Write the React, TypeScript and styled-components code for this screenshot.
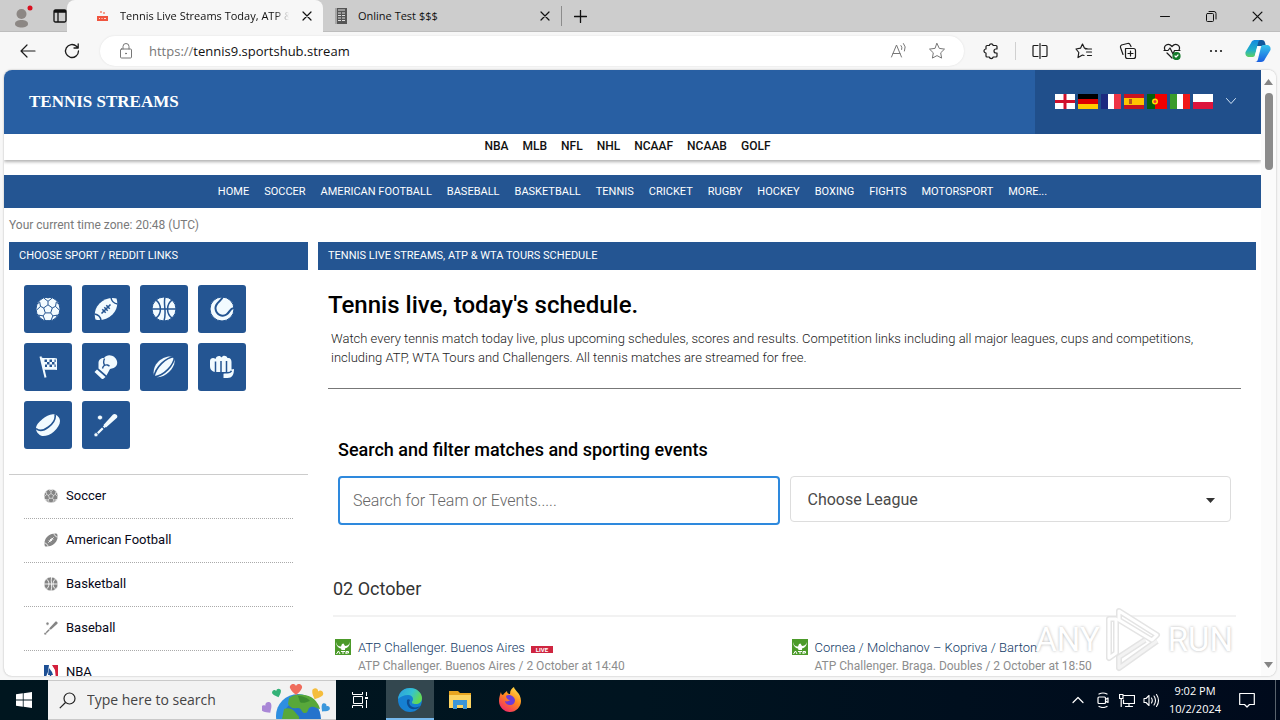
import React from "react";
import styled, { createGlobalStyle } from "styled-components";

const ui = `"Open Sans", "Noto Sans", sans-serif`;
const site = `Roboto, "Liberation Sans", sans-serif`;
const navy = "#245592";

const GlobalStyle = createGlobalStyle`
  *, *::before, *::after { box-sizing: border-box; }
  body { margin: 0; background: #f7f7f7; font-family: ${site}; }
  button { font: inherit; color: inherit; border: 0; padding: 0; background: none; }
  a { color: inherit; text-decoration: none; }
  h1, h2, h3, p, ul { margin: 0; padding: 0; }
  ul { list-style: none; }
  svg { display: block; flex: none; }
`;

const Desktop = styled.div`
  display: flex;
  flex-direction: column;
  height: 100vh;
  overflow: hidden;
`;

/* ---------- browser chrome ---------- */

const TabStrip = styled.header`
  display: flex;
  height: 32px;
  flex: none;
  background: #cdcdcd;
  border-bottom: 1px solid #bdbdbd;
  font: 11px/16px ${ui};
  color: #111;
`;

const StripTools = styled.div`
  display: flex;
  align-items: center;
  gap: 20px;
  width: 67px;
  padding-left: 11px;
`;

const Tab = styled.div<{ $active?: boolean; $width: number }>`
  display: flex;
  align-items: center;
  width: ${(p) => p.$width}px;
  height: 32px;
  padding: 0 9px 0 ${(p) => (p.$active ? 29 : 11)}px;
  gap: ${(p) => (p.$active ? 11 : 10)}px;
  border-radius: 8px 8px 0 0;
  background: ${(p) => (p.$active ? "#f7f7f7" : "transparent")};
`;

const TabTitle = styled.span<{ $fade?: boolean }>`
  flex: 1;
  min-width: 0;
  overflow: hidden;
  white-space: nowrap;
  ${(p) =>
    p.$fade &&
    "mask-image: linear-gradient(to right, #000 calc(100% - 14px), transparent);"}
`;

const IconButton = styled.button<{ $w?: number; $h?: number }>`
  display: flex;
  align-items: center;
  justify-content: center;
  flex: none;
  width: ${(p) => p.$w ?? 44}px;
  height: ${(p) => p.$h ?? 30}px;
`;

const StripDivider = styled.span`
  width: 1px;
  height: 20px;
  margin: 6px 0 0;
  background: #8c8c8c;
`;

const WindowControls = styled.div`
  display: flex;
  margin-left: auto;
`;

const Toolbar = styled.div`
  display: flex;
  align-items: center;
  flex: none;
  height: 38px;
  padding: 0 2px 0 6px;
  background: #f7f7f7;
  color: #1b1b1b;
`;

const AddressBar = styled.div`
  display: flex;
  align-items: center;
  flex: 1;
  height: 30px;
  margin: 0 5px 0 6px;
  padding: 0 8px 0 17px;
  border-radius: 15px;
  background: #fff;
  box-shadow: 0 0 2px #ddd;
  font: 13px/18px ${ui};
  color: #777;
`;

const Scheme = styled.label`
  margin-left: 14px;
`;

const AddressInput = styled.input`
  flex: 1;
  min-width: 0;
  padding: 0;
  border: 0;
  outline: 0;
  background: none;
  color: #111;
  font: inherit;
`;

const ToolDivider = styled.span`
  width: 1px;
  height: 18px;
  margin: 0 2px;
  background: #d0d0d0;
`;

/* ---------- page frame ---------- */

const Frame = styled.div`
  display: flex;
  flex: 1;
  min-height: 0;
  margin: 0 4px 4px;
  overflow: hidden;
  border-radius: 8px;
  background: #fff;
  box-shadow: 0 0 2px #aaa;
  position: relative;
`;

const Page = styled.div`
  flex: 1;
  min-width: 0;
  overflow: hidden;
`;

const ScrollTrack = styled.div`
  display: flex;
  flex-direction: column;
  align-items: center;
  width: 15px;
  padding: 9px 0 8px;
  background: #fbfbfb;
`;

const ScrollThumb = styled.div`
  width: 8px;
  height: 77px;
  margin: 8px 0 auto;
  border-radius: 4px;
  background: #8b8b8b;
`;

/* ---------- site ---------- */

const SiteHeader = styled.div`
  display: flex;
  justify-content: space-between;
  align-items: stretch;
  height: 64px;
  background: #285fa3;
`;

const Brand = styled.a`
  align-self: center;
  padding-left: 25px;
  color: #fff;
  font: bold 17px/20px "Liberation Serif", serif;
`;

const Languages = styled.div`
  display: flex;
  align-items: center;
  gap: 3px;
  width: 226px;
  padding: 0 20px 2px;
  background: #204f8b;
`;

const LanguageToggle = styled.button`
  && { color: #d5e6f7; }
  margin-left: 9px;
`;

const LeagueNav = styled.nav`
  display: flex;
  justify-content: center;
  gap: 14px;
  height: 26px;
  padding-right: 10px;
  box-shadow: 0 2px 3px rgba(0, 0, 0, 0.3);
  color: #111;
  font: 500 12px/24px ${site};
`;

const SportNav = styled.nav`
  display: flex;
  justify-content: center;
  gap: 15px;
  height: 33px;
  margin-top: 15px;
  background: ${navy};
  color: #fff;
  font: 11px/33px ${site};
  white-space: nowrap;
`;

const TimeZone = styled.p`
  && { padding: 0 5px; }
  color: #7a7a7a;
  font-size: 12px;
  line-height: 34px;
`;

const Columns = styled.div`
  display: grid;
  grid-template-columns: 299px minmax(0, 1fr);
  gap: 10px;
  padding: 0 5px;
`;

const PanelTitle = styled.h3`
  && { padding: 0 10px; }
  height: 28px;
  background: ${navy};
  color: #fff;
  font: 11px/27px ${site};
`;

const Tiles = styled.div`
  display: flex;
  flex-wrap: wrap;
  gap: 10px;
  padding: 15px 15px 25px;
  border-bottom: 1px solid #ccc;
`;

const Tile = styled.a`
  display: flex;
  align-items: center;
  justify-content: center;
  width: 48px;
  height: 48px;
  border-radius: 3px;
  background: ${navy};
`;

const SportList = styled.ul`
  && { padding: 0 15px; }
`;

const SportRow = styled.li`
  border-bottom: 1px dotted #aaa;
`;

const SportLink = styled.a`
  display: flex;
  align-items: center;
  gap: 8px;
  height: 43px;
  padding: 0 0 2px 20px;
  color: #080818;
  font-size: 13px;
`;

const Content = styled.div`
  padding: 21px 15px 0 10px;
`;

const Title = styled.h1`
  color: #000;
  font: 500 24px/28px ${site};
`;

const Intro = styled.p`
  && { margin-top: 10px; padding: 0 3px; }
  color: #222;
  font-size: 13px;
  font-weight: 300;
  line-height: 19px;
`;

const Rule = styled.hr`
  margin: 21px 0 0;
  border: 0;
  border-top: 1px solid #777;
`;

const Filter = styled.form`
  margin: 49px 10px 0;
`;

const FilterTitle = styled.h2`
  color: #000;
  font: 500 18px/24px ${site};
`;

const FilterFields = styled.div`
  display: grid;
  grid-template-columns: 1fr 1fr;
  gap: 10px;
  align-items: start;
  margin-top: 14px;
`;

const SearchInput = styled.input`
  width: 100%;
  height: 49px;
  padding: 0 13px;
  border: 2px solid #2e89dd;
  border-radius: 4px;
  outline: 0;
  background: #fff;
  color: #333;
  font: 300 16px/20px ${site};
  &::placeholder { color: #666; opacity: 1; }
`;

const SelectWrap = styled.div`
  position: relative;
`;

const LeagueSelect = styled.select`
  appearance: none;
  width: 100%;
  height: 46px;
  padding: 2px 17px 0;
  border: 1px solid #ddd;
  border-radius: 4px;
  background: #fff;
  color: #4a4a4a;
  font: 16px/20px ${site};
`;

const SelectArrow = styled.svg`
  position: absolute;
  right: 16px;
  top: 22px;
  pointer-events: none;
`;

const DateTitle = styled.h2`
  && { margin: 52px 5px 0; padding-bottom: 14px; }
  border-bottom: 2px solid #f2f2f2;
  color: #333;
  font: 18px/24px ${site};
`;

const Matches = styled.div`
  display: grid;
  grid-template-columns: 1fr 1fr;
  gap: 10px;
  margin: 22px 5px 0;
`;

const Match = styled.a`
  display: flex;
  gap: 7px;
  padding-left: 2px;
`;

const MatchName = styled.div`
  display: flex;
  align-items: center;
  gap: 6px;
  color: #123a66;
  font-size: 13px;
  font-weight: 300;
  line-height: 18px;
`;

const MatchInfo = styled.div`
  color: #8d8d8d;
  font-size: 12px;
  line-height: 18px;
`;

const Live = styled.span`
  width: 22px;
  height: 7px;
  margin-top: 2px;
  background: #cf2540;
  color: #fff;
  font: 700 6px/7px ${site};
  text-align: center;
`;

const Watermark = styled.div`
  position: absolute;
  right: 43px;
  bottom: 3px;
  display: flex;
  align-items: center;
  gap: 5px;
  color: #fff;
  font: 33px/40px ${site};
  text-shadow: 0 0 3px rgba(0, 0, 0, 0.3);
  pointer-events: none;
`;

/* ---------- taskbar ---------- */

const Taskbar = styled.footer`
  display: flex;
  flex: none;
  height: 40px;
  background: linear-gradient(to right, #00161f, #001420 50%, #000a1c);
  color: #fff;
`;

const TaskSearch = styled.label`
  display: flex;
  align-items: center;
  width: 288px;
  border: 1px solid #c9c9c9;
  border-width: 1px 0;
  background: #f2f2f2;
  padding-left: 11px;
`;

const TaskInput = styled.input`
  flex: 1;
  min-width: 0;
  margin-left: 11px;
  padding: 0;
  border: 0;
  outline: 0;
  background: none;
  font: 14px/20px ${ui};
  &::placeholder { color: #444; opacity: 1; }
`;

const TaskButton = styled(IconButton)<{ $active?: boolean }>`
  && {
    width: 48px;
    height: 40px;
    margin-right: 2px;
    background: ${(p) => (p.$active ? "#33474f" : "none")};
    box-shadow: ${(p) => (p.$active ? "inset 0 -2px #76b9ed" : "none")};
  }
`;

const Tray = styled.div`
  display: flex;
  align-items: center;
  margin-left: auto;
  padding-right: 4px;
`;

const Clock = styled.time`
  width: 64px;
  text-align: center;
  font: 11px/18px ${ui};
`;

const ShowDesktop = styled.span`
  width: 1px;
  height: 40px;
  background: #59636d;
  margin-left: 8px;
`;

/* ---------- drawings ---------- */

const Line = ({
  d,
  s = 18,
  w = 1,
  vb = 18,
  children,
}: {
  d: string;
  s?: number;
  w?: number;
  vb?: number;
  children?: React.ReactNode;
}) => (
  <svg
    width={s}
    height={s}
    viewBox={`0 0 ${vb} ${vb}`}
    fill="none"
    stroke="currentColor"
    strokeWidth={w}
    strokeLinejoin="round"
    strokeLinecap="round"
    aria-hidden
  >
    <path d={d} />
    {children}
  </svg>
);

const CloseIcon = ({ s = 10 }: { s?: number }) => (
  <Line s={s} vb={10} w={1.2} d="M1 1l8 8M9 1L1 9" />
);

type SportName =
  | "soccer" | "football" | "basketball" | "tennis" | "flag"
  | "boxing" | "rugby" | "fist" | "puck" | "baseball";

const SportIcon = ({ name, size, ink, cut }: { name: SportName; size: number; ink: string; cut: string }) => {
  const art: Record<SportName, React.ReactNode> = {
    soccer: (
      <>
        <circle cx="12" cy="12" r="12" fill={ink} />
        <path d="M12 7.800l4.300 3.100-1.600 5H9.300l-1.600-5zM12 7.800V4.300M16.300 10.900l3.200-1.500M14.700 15.900l2.200 3M9.300 15.900l-2.200 3M7.700 10.900L4.500 9.400M12 4.300L8 1.200M12 4.300l4-3.100M19.500 9.400l.8-4.400M19.500 9.400l3.800 3.600M16.900 18.900l4.500-.8M16.900 18.900l-1.800 4.200M7.100 18.900l-4.500-.8M7.100 18.900l1.800 4.200M4.500 9.400L3.700 5M4.500 9.400L.7 13" />
        <path fill={cut} stroke="none" d="M9 0h6l-3 1.500zM20 3.800l3 4.500-2-2zM22.500 17.500l-3 3.500 1.200-3zM4.500 21l-3-3.500 1.800.5zM4 3.800L1 8.300l2-2zM9.500 24l2.500-1 2.500 1z" />
      </>
    ),
    football: (
      <>
        <path fill={ink} stroke="none" d="M22.500 1.500c1.600 4.500 1 11-4 16S6 24 1.500 22.500C0 18 .5 11.500 5.500 6.500S18 0 22.500 1.500z" />
        <path strokeWidth="1.500" d="M17 .5c.5 3.500 3 6 6.500 6.500M.5 17c3.500.5 6 3 6.500 6.500" />
        <path strokeWidth="1.600" d="M7.500 16.500l9-9M8.300 12.300l3.400 3.400M12.300 8.300l3.400 3.400M10.300 10.300l3.400 3.400" />
      </>
    ),
    basketball: (
      <>
        <circle cx="12" cy="12" r="12" fill={ink} />
        <path strokeWidth="1.500" d="M0 12h24M13 0c-2 7 2 15-1 24M3.800 2.800c6.200 4.400 6.200 14 0 18.400M20.200 2.800c-6.200 4.400-6.200 14 0 18.400" />
      </>
    ),
    tennis: (
      <>
        <circle cx="12" cy="12" r="12" fill={ink} />
        <path strokeWidth="2" d="M13-1C12.500 4 5 5 5.500 11.500c.5 6 6.500 9 11 6 4-2.600 3-6.500 8.500-6.500" />
      </>
    ),
    flag: (
      <>
        <path stroke={ink} strokeWidth="2" d="M4.500 1.500l5 21" />
        <path fill={ink} stroke="none" d="M5 2.500c5 1.500 10-.5 16 1v11.500c-5-1-9 .5-13.500-.5z" />
        <path fill={cut} stroke="none" d="M8.500 4.500H11V7H8.500zM13.500 4.500H16V7h-2.500zM11 7h2.500v2.500H11zM16 7h2.500v2.500H16zM9 9.500h2V12H9zM13.500 9.500H16V12h-2.500zM18.500 4.500h1.200V7h-1.200zM18.500 9.500h1.200V12h-1.200z" />
      </>
    ),
    boxing: (
      <>
        <path fill={ink} stroke="none" d="M3 14.500l8.500 7.500-3 2.500L.5 17zM4.500 13.500V8C4.500 5 7 2.500 10 3 12 .5 15-.5 18 .8c4 1.400 6.500 6 4.500 9.700-1.500 2.500-4 3-6.500 3.500L12.500 20.500z" />
        <path strokeWidth="1.400" d="M10.500 3.500C9.500 6 9 8 10.500 9.800M8.500 13.500c.5-2 2-4 5-3.500l2 1" />
      </>
    ),
    rugby: (
      <>
        <path fill={ink} stroke="none" d="M21.500 2.500c3 5-.5 10.500-4.500 14.500S7 23.500 2.500 21.500C.5 17 2 11 6 7s11-7 15.500-4.500z" />
        <path strokeWidth="1.600" d="M22.500 1.500C14 2.500 3.500 12 2 22M22.500 1.500c-.5 8.500-10 19-20.500 20.500" />
      </>
    ),
    fist: (
      <>
        <path fill={ink} stroke="none" d="M0 6c0-3 3.500-4 5.500-2 .5-3.500 5-4 6-1.500 1.500-2.500 5-2 6 .5 3-.5 4 1.500 4 4v7.500l2.500-.5c0 6-2 9-6.500 9H13.500v-4.500L17 17H7C2.500 17 0 15 0 11z" />
        <path strokeWidth="1.500" d="M5.500 6.500V17M11 6v11M16.500 6v11M12 17.700h5.500c2 0 3.500-.7 4-2" />
      </>
    ),
    puck: (
      <>
        <path fill={ink} stroke="none" d="M18.500 1.500c2.500.5 5.500 3 5.500 6.500 0 3.500-2.500 7-6 10.500s-9 5-12 4.500C3 22 0 19 0 15.500 0 12 3 9 6.500 6S15 .5 18.500 1.500z" />
        <path strokeWidth="1.600" d="M0 15.500c3.500 3 8 2 12.500-1.500 4.500-3.500 7.500-8 6.500-12.500" />
      </>
    ),
    baseball: (
      <>
        <circle cx="6" cy="4.500" r="2.600" fill={ink} />
        <path stroke={ink} strokeWidth="2.400" strokeLinecap="round" d="M2.500 21.500L11 13" />
        <path fill={ink} stroke="none" d="M9.500 12L19 1.500c2-1.800 5.500.8 4 3.200L12 14.500z" />
        <circle cx="2" cy="21.800" r="2.200" fill={ink} />
        <path strokeWidth="1.200" d="M7.500 13l3.500 3.500" />
      </>
    ),
  };
  return (
    <svg width={size} height={size} viewBox="0 0 24 24" fill="none" stroke={cut} strokeWidth="1" aria-hidden>
      {art[name]}
    </svg>
  );
};

const flags: { name: string; art: React.ReactNode }[] = [
  { name: "English", art: <><path fill="#fff" d="M0 0h20v15H0z" /><path fill="#d0102c" d="M8.500 0h3v15h-3zM0 6h20v3H0z" /></> },
  { name: "Deutsch", art: <><path d="M0 0h20v5H0z" /><path fill="#d00" d="M0 5h20v5H0z" /><path fill="#fc0" d="M0 10h20v5H0z" /></> },
  { name: "Français", art: <><path fill="#fff" d="M0 0h20v15H0z" /><path fill="#1c2a80" d="M0 0h7v15H0z" /><path fill="#ee3445" d="M13 0h7v15h-7z" /></> },
  { name: "Español", art: <><path fill="#c8141e" d="M0 0h20v15H0z" /><path fill="#ffc400" d="M0 4h20v7H0z" /><path fill="#b5531f" d="M5 5h3v5H5z" /></> },
  { name: "Português", art: <><path fill="#f00000" d="M0 0h20v15H0z" /><path fill="#06600a" d="M0 0h8v15H0z" /><circle cx="8" cy="7.500" r="3" fill="#fd0" /><circle cx="8" cy="7.500" r="1.500" fill="#e33" /></> },
  { name: "Italiano", art: <><path fill="#fff" d="M0 0h20v15H0z" /><path fill="#3a9c2c" d="M0 0h7v15H0z" /><path fill="#f01818" d="M13 0h7v15h-7z" /></> },
  { name: "Polski", art: <><path fill="#fff" d="M0 0h20v8H0z" /><path fill="#dc143c" d="M0 8h20v7H0z" /></> },
];

const AtpLogo = () => (
  <svg width="16" height="16" viewBox="0 0 16 16" aria-hidden>
    <path fill="#4c9a2a" d="M0 0h16v16H0z" />
    <path fill="#fff" d="M1 3c1 4 3 4.500 5 4.500L7 5l1.500-.5L10 7c2 0 4-1 5-4-.5 4-2 6-5 6.500V11H6.500L6 9.500C3 9 1 6 1 3z" />
    <path d="M1.500 15l2-3 1.500 3M6 12.500h4M8 12.500V15M11 15v-2.500h2.500v1.500H11" stroke="#fff" fill="none" />
  </svg>
);

const Copilot = () => (
  <svg width="26" height="26" viewBox="0 0 26 26" aria-hidden>
    <defs>
      <linearGradient id="cpA" x1="0" y1="0" x2="0" y2="1">
        <stop offset="0" stopColor="#1289e0" />
        <stop offset=".6" stopColor="#22b0c8" />
        <stop offset="1" stopColor="#5fd060" />
      </linearGradient>
      <linearGradient id="cpB" x1="0" y1="0" x2="0" y2="1">
        <stop offset="0" stopColor="#35c4ec" />
        <stop offset="1" stopColor="#1a5fe0" />
      </linearGradient>
    </defs>
    <path fill="#12589c" d="M9 2h8c3 0 3 3 4 6h-9z" />
    <path fill="url(#cpA)" d="M6 5c.6-2 2-3 4-3h6c-2 0-2.500 1-3 3l-3 12c-.6 2-2 2-3 2H4.500c-3 0-4.500-2-4-5z" />
    <path fill="url(#cpB)" d="M20 21c-.6 2-2 3-4 3h-6c2 0 2.500-1 3-3l3-12c.6-2 2-2 3-2h2.500c3 0 4.500 2 4 5z" />
    <path fill="#fff" d="M12.500 8.500h3l-2.500 9h-3z" />
  </svg>
);

const EdgeLogo = () => (
  <svg width="26" height="26" viewBox="0 0 26 26" aria-hidden>
    <defs>
      <linearGradient id="edA" x1="0" y1="0" x2="1" y2=".4">
        <stop offset="0" stopColor="#2b9be0" />
        <stop offset=".6" stopColor="#35c3d0" />
        <stop offset="1" stopColor="#62d957" />
      </linearGradient>
    </defs>
    <circle cx="13" cy="13" r="12" fill="#1680d2" />
    <path fill="url(#edA)" d="M1 12C2 4 8 1 13 1c7 0 12 5 12 10 0 4-3 6-6 6-4 0-4-1-4-2 0-1 1-1 1-3 0-2-2-4-5-4-4 0-8 2-10 4z" />
    <path fill="#0c4d93" d="M10 13c-1 6 3 10 8 9 3 0 4-2 5-3-3 2-8 2-10-1-1-2-1-3 0-5-1-1-2-1-3 0z" />
  </svg>
);

const Explorer = () => (
  <svg width="22" height="20" viewBox="0 0 22 20" aria-hidden>
    <path fill="#e8a520" d="M0 1h9l2 2h11v15H0z" />
    <path fill="#fcd462" d="M0 5h22v13H0z" />
    <path fill="#3a95d8" d="M4 10h14v9h-4v-4H8v4H4z" />
    <path fill="#fcd462" d="M9 15h4v3H9z" />
  </svg>
);

const Firefox = () => (
  <svg width="24" height="26" viewBox="0 0 24 26" aria-hidden>
    <defs>
      <linearGradient id="ffA" x1=".8" y1="0" x2=".2" y2="1">
        <stop offset="0" stopColor="#ffe14a" />
        <stop offset=".45" stopColor="#ff8a1c" />
        <stop offset="1" stopColor="#f0246c" />
      </linearGradient>
    </defs>
    <path fill="url(#ffA)" d="M3 5c0 2 1 3 2 3 1-2 3-3 4-4 0 2 1 3 3 3 0-4 2-6 4-7 0 3 7 6 7 14 0 6-5 11-11 11S1 20 1 14c0-4 1-6 2-9z" />
    <path fill="#6b3bd8" d="M8 9c2-2 8-1 9 4 0 3-2 5-5 5s-5-2-5-4c2 1 4 0 5-1-2 0-4-2-4-4z" />
  </svg>
);

const heart = "M0 -3C-2 -7 -7 -4 -6 -1C-5 2 -2 4 0 6C2 4 5 2 6 -1C7 -4 2 -7 0 -3Z";

const SearchDoodle = () => (
  <svg width="74" height="38" viewBox="0 0 74 38" aria-hidden>
    <circle cx="36" cy="35" r="22" fill="#2e8fe0" />
    <circle cx="40" cy="38" r="19" fill="#2473cc" />
    <path fill="#58a83a" d="M27 17c6-5 16-4 22-1 5 3 8 8 9 12-4 0-5-3-9-2s-2 6-6 6-3-6-8-5-7-1-9-4zM22 28c4-2 9 0 11 3s5 4 4 7H20z" />
    <path fill="#3c8c30" d="M36 15c5 0 10 2 12 5-3 1-8 3-10 1z" />
    <path fill="#ef6c5c" transform="translate(34 8)" d={heart} />
    <path fill="#34b277" transform="translate(15 12) rotate(-20) scale(.75)" d={heart} />
    <path fill="#f5bd3c" transform="translate(55 13) rotate(25) scale(.95)" d={heart} />
    <path fill="#a987d6" transform="translate(5 27) rotate(-35) scale(.95)" d={heart} />
    <path fill="#3b97dc" transform="translate(63 27) rotate(40) scale(.75)" d={heart} />
  </svg>
);

const leagues = ["NBA", "MLB", "NFL", "NHL", "NCAAF", "NCAAB", "GOLF"];
const sports = [
  "HOME", "SOCCER", "AMERICAN FOOTBALL", "BASEBALL", "BASKETBALL", "TENNIS", "CRICKET",
  "RUGBY", "HOCKEY", "BOXING", "FIGHTS", "MOTORSPORT", "MORE...",
];
const tiles: SportName[] = [
  "soccer", "football", "basketball", "tennis", "flag", "boxing", "rugby", "fist", "puck", "baseball",
];
const list: { label: string; icon?: SportName }[] = [
  { label: "Soccer", icon: "soccer" },
  { label: "American Football", icon: "football" },
  { label: "Basketball", icon: "basketball" },
  { label: "Baseball", icon: "baseball" },
  { label: "NBA" },
];
const matches = [
  { name: "ATP Challenger. Buenos Aires", info: "ATP Challenger. Buenos Aires / 2 October at 14:40", live: true },
  { name: "Cornea / Molchanov – Kopriva / Barton", info: "ATP Challenger. Braga. Doubles / 2 October at 18:50", live: false },
];

export default function App() {
  return (
    <Desktop>
      <GlobalStyle />
      <TabStrip>
        <StripTools>
          <svg width="22" height="28" viewBox="0 0 22 28" aria-hidden>
            <circle cx="10.500" cy="12" r="5" fill="#8c8784" />
            <path fill="#8c8784" d="M4 22c0-3 3-4 6.500-4s6.500 1 6.500 4c0 2-3 3.500-6.500 3.500S4 24 4 22z" />
            <circle cx="20" cy="6" r="2.500" fill="#d90f1f" transform="translate(-1 0)" />
          </svg>
          <Line s={14} vb={14} w={1.3} d="M2.500 1h9Q13 1 13 2.500v9q0 1.500-1.500 1.500h-9Q1 13 1 11.500v-9Q1 1 2.500 1zM1 3h12M1 2h12M5 4v9" />
        </StripTools>
        <Tab $active $width={256}>
          <svg width="13" height="12" viewBox="0 0 13 12" aria-hidden>
            <path fill="#f0553f" d="M1 6h11v5H1z" />
            <path fill="#f6a08f" d="M4 1h2v2H4zM7 2h2v2H7z" />
            <path stroke="#fff" strokeWidth=".8" d="M3 8.500h1M5.500 8.500h1M8 8.500h2" />
          </svg>
          <TabTitle $fade>Tennis Live Streams Today, ATP &amp;</TabTitle>
          <IconButton $w={14} $h={14} aria-label="Close tab"><CloseIcon /></IconButton>
        </Tab>
        <Tab $width={238}>
          <svg width="14" height="16" viewBox="0 0 14 16" aria-hidden>
            <path fill="#555" d="M1 0h12v16H1z" />
            <path stroke="#ddd" strokeWidth="1.200" d="M4 2h7M4 5h3M8 5h3M4 7.500h3M8 7.500h3M4 10h3M8 10h3M4 12.500h3M8 12.500h3M2 0v16" />
          </svg>
          <TabTitle>Online Test $$$</TabTitle>
          <IconButton $w={14} $h={14} aria-label="Close tab"><CloseIcon /></IconButton>
        </Tab>
        <StripDivider />
        <IconButton $w={36} $h={32} aria-label="New tab">
          <Line s={13} vb={13} w={1.3} d="M6.500 0.500v12M0.500 6.500h12" />
        </IconButton>
        <WindowControls>
          <IconButton $w={46} $h={32} aria-label="Minimize"><Line s={10} vb={10} d="M0.500 5.500h9" /></IconButton>
          <IconButton $w={46} $h={32} aria-label="Restore">
            <Line s={11} vb={11} d="M1.500 2.500h5q1 0 1 1v6q0 1-1 1h-5q-1 0-1-1v-6q0-1 1-1zM3 .5h5q2 0 2 2V8" />
          </IconButton>
          <IconButton $w={46} $h={32} aria-label="Close window"><CloseIcon s={11} /></IconButton>
        </WindowControls>
      </TabStrip>

      <Toolbar>
        <IconButton aria-label="Back"><Line s={16} vb={16} w={1.2} d="M15 8H1M7 2L1 8l6 6" /></IconButton>
        <IconButton aria-label="Reload">
          <Line s={16} vb={16} w={1.300} d="M14.500 8A6.500 6.500 0 1 1 12.500 3.300L14 5M14.200 1v4H10" />
        </IconButton>
        <AddressBar>
          <Line s={18} d="M4.500 7h9q1 0 1 1v7q0 1-1 1h-9q-1 0-1-1V8q0-1 1-1zM6 7V4.500a3 3 0 0 1 6 0V7" >
            <circle cx="9" cy="11.500" r=".5" fill="currentColor" />
          </Line>
          <Scheme htmlFor="address">https://</Scheme>
          <AddressInput id="address" defaultValue="tennis9.sportshub.stream" />
          <IconButton $w={38} aria-label="Read aloud">
            <Line s={18} d="M1.500 15L6.500 3l5 12M3 11.500h7M11 3.500q1.500 1.500.7 4M13.500 1.500q3 3 1 7.500" />
          </IconButton>
          <IconButton $w={38} aria-label="Add to favorites">
            <Line s={18} d="M9 1.500l2.300 4.900 5.200.7-3.800 3.700.9 5.300L9 13.600l-4.600 2.500.9-5.300L1.500 7.100l5.200-.7z" />
          </IconButton>
        </AddressBar>
        <IconButton aria-label="Extensions">
          <Line s={18} w={1.200} d="M5 3.500h2.300a2 2 0 0 1 3.900 0h2.800q1 0 1 1V7h-1a2 2 0 0 0 0 4h1v3q0 1-1 1h-2.800a2 2 0 0 1-3.900 0H5q-1 0-1-1v-3a2 2 0 0 1 0-4V4.500q0-1 1-1z" />
        </IconButton>
        <ToolDivider />
        <IconButton aria-label="Split screen">
          <Line s={18} w={1.200} d="M7 3.500H3q-1 0-1 1v9q0 1 1 1h4M11 3.500h4q1 0 1 1v9q0 1-1 1h-4M9 1.500v15" />
        </IconButton>
        <IconButton aria-label="Favorites">
          <Line s={18} w={1.200} d="M9 13.500L7.500 13 3 15.500l.8-5L1 7l4.500-.8L7.500 2l2 4.200L13 7M10.500 7h6M11.500 10h5M12.500 13.500h4" />
        </IconButton>
        <IconButton aria-label="Collections">
          <Line s={18} w={1.200} d="M7.500 6.500h7q2 0 2 2v6q0 2-2 2h-6q-2 0-2-2v-8zM11.500 9v5M9 11.500h5M4 12.500L1.500 5.500Q1 4 2.500 3l6-1.500q2-.5 2.500 1L12 4.500" />
        </IconButton>
        <IconButton aria-label="Browser essentials">
          <Line s={18} w={1.200} d="M2 8C0 4 5 0 9 4.500 13 0 18 4 16 8M1 8.500h4L7 6l3 6 1.500-3.500H17M4 11l5 5">
            <circle cx="13.500" cy="14" r="3.500" fill="#127a2a" stroke="#127a2a" />
            <path stroke="#fff" d="M12 14l1 1 2-2" />
          </Line>
        </IconButton>
        <IconButton aria-label="Settings and more">
          <svg width="14" height="4" viewBox="0 0 14 4" fill="currentColor"><circle cx="2" cy="2" r="1.100" /><circle cx="7" cy="2" r="1.100" /><circle cx="12" cy="2" r="1.100" /></svg>
        </IconButton>
        <IconButton $w={40} aria-label="Copilot"><Copilot /></IconButton>
      </Toolbar>

      <Frame>
        <Page>
          <SiteHeader>
            <Brand href="#">TENNIS STREAMS</Brand>
            <Languages>
              {flags.map((f) => (
                <svg key={f.name} width="20" height="15" viewBox="0 0 20 15" role="img" aria-label={f.name}>{f.art}</svg>
              ))}
              <LanguageToggle aria-label="More languages"><Line s={12} vb={12} d="M1.500 3.500L6 8.500l4.500-5" /></LanguageToggle>
            </Languages>
          </SiteHeader>
          <LeagueNav>{leagues.map((l) => <a key={l} href="#">{l}</a>)}</LeagueNav>
          <SportNav>{sports.map((s) => <a key={s} href="#">{s}</a>)}</SportNav>
          <TimeZone>Your current time zone: 20:48 (UTC)</TimeZone>
          <Columns>
            <aside>
              <PanelTitle>CHOOSE SPORT / REDDIT LINKS</PanelTitle>
              <Tiles>
                {tiles.map((t) => (
                  <Tile key={t} href="#" aria-label={t}><SportIcon name={t} size={24} ink="#f2fbff" cut={navy} /></Tile>
                ))}
              </Tiles>
              <SportList>
                {list.map((s) => (
                  <SportRow key={s.label}>
                    <SportLink href="#">
                      {s.icon ? (
                        <SportIcon name={s.icon} size={14} ink="#858585" cut="#fff" />
                      ) : (
                        <svg width="14" height="14" viewBox="0 0 14 14" aria-hidden>
                          <path fill="#1d4f94" d="M0 0h7v14H0z" />
                          <path fill="#d3203c" d="M7 0h7v14H7z" />
                          <path fill="#fff" d="M5 0h3l3 5 1 9H8L7 9l-4 5H1l3-7z" />
                          <path fill="#1d4f94" d="M5 3l3 4 1 3H4z" />
                        </svg>
                      )}
                      {s.label}
                    </SportLink>
                  </SportRow>
                ))}
              </SportList>
            </aside>
            <main>
              <PanelTitle>TENNIS LIVE STREAMS, ATP &amp; WTA TOURS SCHEDULE</PanelTitle>
              <Content>
                <Title>Tennis live, today's schedule.</Title>
                <Intro>
                  Watch every tennis match today live, plus upcoming schedules, scores and results. Competition links
                  including all major leagues, cups and competitions, including ATP, WTA Tours and Challengers. All
                  tennis matches are streamed for free.
                </Intro>
                <Rule />
                <Filter>
                  <FilterTitle>Search and filter matches and sporting events</FilterTitle>
                  <FilterFields>
                    <SearchInput aria-label="Search for team or events" placeholder="Search for Team or Events....." />
                    <SelectWrap>
                      <LeagueSelect aria-label="Choose league"><option>Choose League</option></LeagueSelect>
                      <SelectArrow width="9" height="5" viewBox="0 0 9 5"><path fill="#333" d="M0 0h9L4.500 5z" /></SelectArrow>
                    </SelectWrap>
                  </FilterFields>
                </Filter>
                <DateTitle>02 October</DateTitle>
                <Matches>
                  {matches.map((m) => (
                    <Match key={m.name} href="#">
                      <AtpLogo />
                      <div>
                        <MatchName>{m.name}{m.live && <Live>LIVE</Live>}</MatchName>
                        <MatchInfo>{m.info}</MatchInfo>
                      </div>
                    </Match>
                  ))}
                </Matches>
              </Content>
            </main>
          </Columns>
        </Page>
        <ScrollTrack>
          <svg width="9" height="6" viewBox="0 0 9 6"><path fill="#858585" d="M0 6h9L4.500 0z" /></svg>
          <ScrollThumb />
          <svg width="9" height="6" viewBox="0 0 9 6"><path fill="#858585" d="M0 0h9L4.500 6z" /></svg>
        </ScrollTrack>
        <Watermark>
          ANY
          <svg width="58" height="66" viewBox="0 0 58 66" fill="none" strokeLinejoin="round" aria-hidden>
            <g stroke="#e4e4e4" strokeWidth="6"><path d="M14 4l38 24-5 5L14 13zM4 12h7v34l-7 5zM52 34L14 61V50l26-17" /></g>
            <g stroke="#fff" strokeWidth="3"><path d="M14 4l38 24-5 5L14 13zM4 12h7v34l-7 5z" /></g>
            <path stroke="#f3f3f3" strokeWidth="3" d="M52 34L14 61V50l26-17" />
          </svg>
          RUN
        </Watermark>
      </Frame>

      <Taskbar>
        <IconButton $w={48} $h={40} aria-label="Start">
          <svg width="16" height="16" viewBox="0 0 16 16" fill="#fff"><path d="M0 2.300L6.800 1.300V7.600H0zM7.600 1.200L16 0v7.600H7.600zM0 8.400h6.800v6.300L0 13.700zM7.600 8.400H16V16l-8.400-1.200z" /></svg>
        </IconButton>
        <TaskSearch>
          <svg width="17" height="17" viewBox="0 0 17 17" fill="none" stroke="#222" strokeWidth="1.200"><circle cx="10.500" cy="6.500" r="5.500" /><path d="M6.500 10.500L.8 16.200" /></svg>
          <TaskInput placeholder="Type here to search" aria-label="Type here to search" />
          <SearchDoodle />
        </TaskSearch>
        <TaskButton aria-label="Task view">
          <svg width="17" height="16" viewBox="0 0 17 16" fill="none" stroke="#fff"><path d="M.5 0v2.500h10V0M.5 16v-2.500h10V16M1.500 4.500h9v7h-9zM14.500 0v4M14.500 8v8" /><path fill="#fff" stroke="none" d="M13 5h3v2h-3z" /></svg>
        </TaskButton>
        <TaskButton $active aria-label="Edge"><EdgeLogo /></TaskButton>
        <TaskButton aria-label="File Explorer"><Explorer /></TaskButton>
        <TaskButton aria-label="Firefox"><Firefox /></TaskButton>
        <Tray>
          <IconButton $w={26} aria-label="Show hidden icons"><Line s={12} vb={12} w={1.200} d="M1 8.500l5-5 5 5" /></IconButton>
          <IconButton $w={24} aria-label="Meet now">
            <Line s={16} vb={16} w={1.200} d="M4 5h5.500q1 0 1 1v4.500q0 1-1 1H4q-1 0-1-1V6q0-1 1-1zM10.500 7.500L13 6v4.500L10.500 9M4 2q4-2 8 0M4 14.500q4 2 8 0" />
          </IconButton>
          <IconButton $w={24} aria-label="Network">
            <Line s={16} vb={16} w={1.200} d="M5 3.500h10.500v8H4.500V8M10 11.500V14M6.500 14.500h7M.5 2.500H4v4H.5zM2.200 6.500v8" />
          </IconButton>
          <IconButton $w={24} aria-label="Volume">
            <Line s={17} vb={17} w={1.100} d="M1 6.500h2l3-3v10l-3-3H1zM8.500 6q1.500 2.500 0 5M11 4q3 4.500 0 9M13.500 2.500q4 6 0 12" />
          </IconButton>
          <Clock>9:02 PM<br />10/2/2024</Clock>
          <IconButton $w={40} aria-label="Notifications">
            <Line s={16} vb={16} w={1.200} d="M.7 1.500h14.600v11h-4.800L8 15l-2.500-2.500H.7z" />
          </IconButton>
          <ShowDesktop />
        </Tray>
      </Taskbar>
    </Desktop>
  );
}
